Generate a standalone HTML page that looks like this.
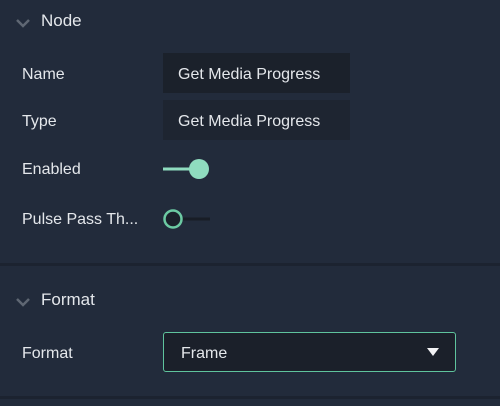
<!DOCTYPE html>
<html><head><style>
body{margin:0;width:500px;height:406px;background:#222b3b;font-family:"Liberation Sans",sans-serif;color:#e4e7eb;position:relative;overflow:hidden}
.t{position:absolute;font-size:16px;line-height:18px;white-space:nowrap}
.h{font-size:17px}
.in{position:absolute;background:#1b212b;left:163px;width:187px;height:40px}
.div{position:absolute;left:0;width:500px;height:3px;background:#1c2330}
</style></head><body>
<svg style="position:absolute;left:15px;top:18px" width="16" height="10"><path d="M2 2 L8 8 L14 2" stroke="#5f6773" stroke-width="2.5" fill="none"/></svg>
<div class="t h" style="left:41px;top:12px">Node</div>
<div class="t" style="left:22px;top:66px">Name</div>
<div class="in" style="top:53px"></div>
<div class="t" style="left:178px;top:66px">Get Media Progress</div>
<div class="t" style="left:22px;top:113px">Type</div>
<div class="in" style="top:100px;background:#1e2531"></div>
<div class="t" style="left:178px;top:113px">Get Media Progress</div>
<div class="t" style="left:22px;top:161px">Enabled</div>
<div class="t" style="left:22px;top:211px">Pulse Pass Th...</div>
<svg style="position:absolute;left:160px;top:155px" width="60" height="80">
<line x1="3" y1="14" x2="44" y2="14" stroke="#8fdcbf" stroke-width="3"/>
<circle cx="39" cy="14" r="10" fill="#8fdcbf"/>
<line x1="14" y1="64" x2="50" y2="64" stroke="#181d26" stroke-width="3"/>
<circle cx="13" cy="64" r="8.5" fill="#1b212b" stroke="#6ccaa3" stroke-width="2.5"/>
</svg>
<div class="div" style="top:263px"></div>
<svg style="position:absolute;left:15px;top:297px" width="16" height="10"><path d="M2 2 L8 8 L14 2" stroke="#5f6773" stroke-width="2.5" fill="none"/></svg>
<div class="t h" style="left:41px;top:291px">Format</div>
<div class="t" style="left:22px;top:345px">Format</div>
<div style="position:absolute;left:163px;top:332px;width:291px;height:38px;border:1px solid #5fc49d;border-radius:3px;background:#1b202a"></div>
<div class="t" style="left:181px;top:345px">Frame</div>
<svg style="position:absolute;left:426px;top:347px" width="14" height="10"><path d="M1 1 L13 1 L7 9 Z" fill="#f2f2f4"/></svg>
<div class="div" style="top:396px"></div>
</body></html>
